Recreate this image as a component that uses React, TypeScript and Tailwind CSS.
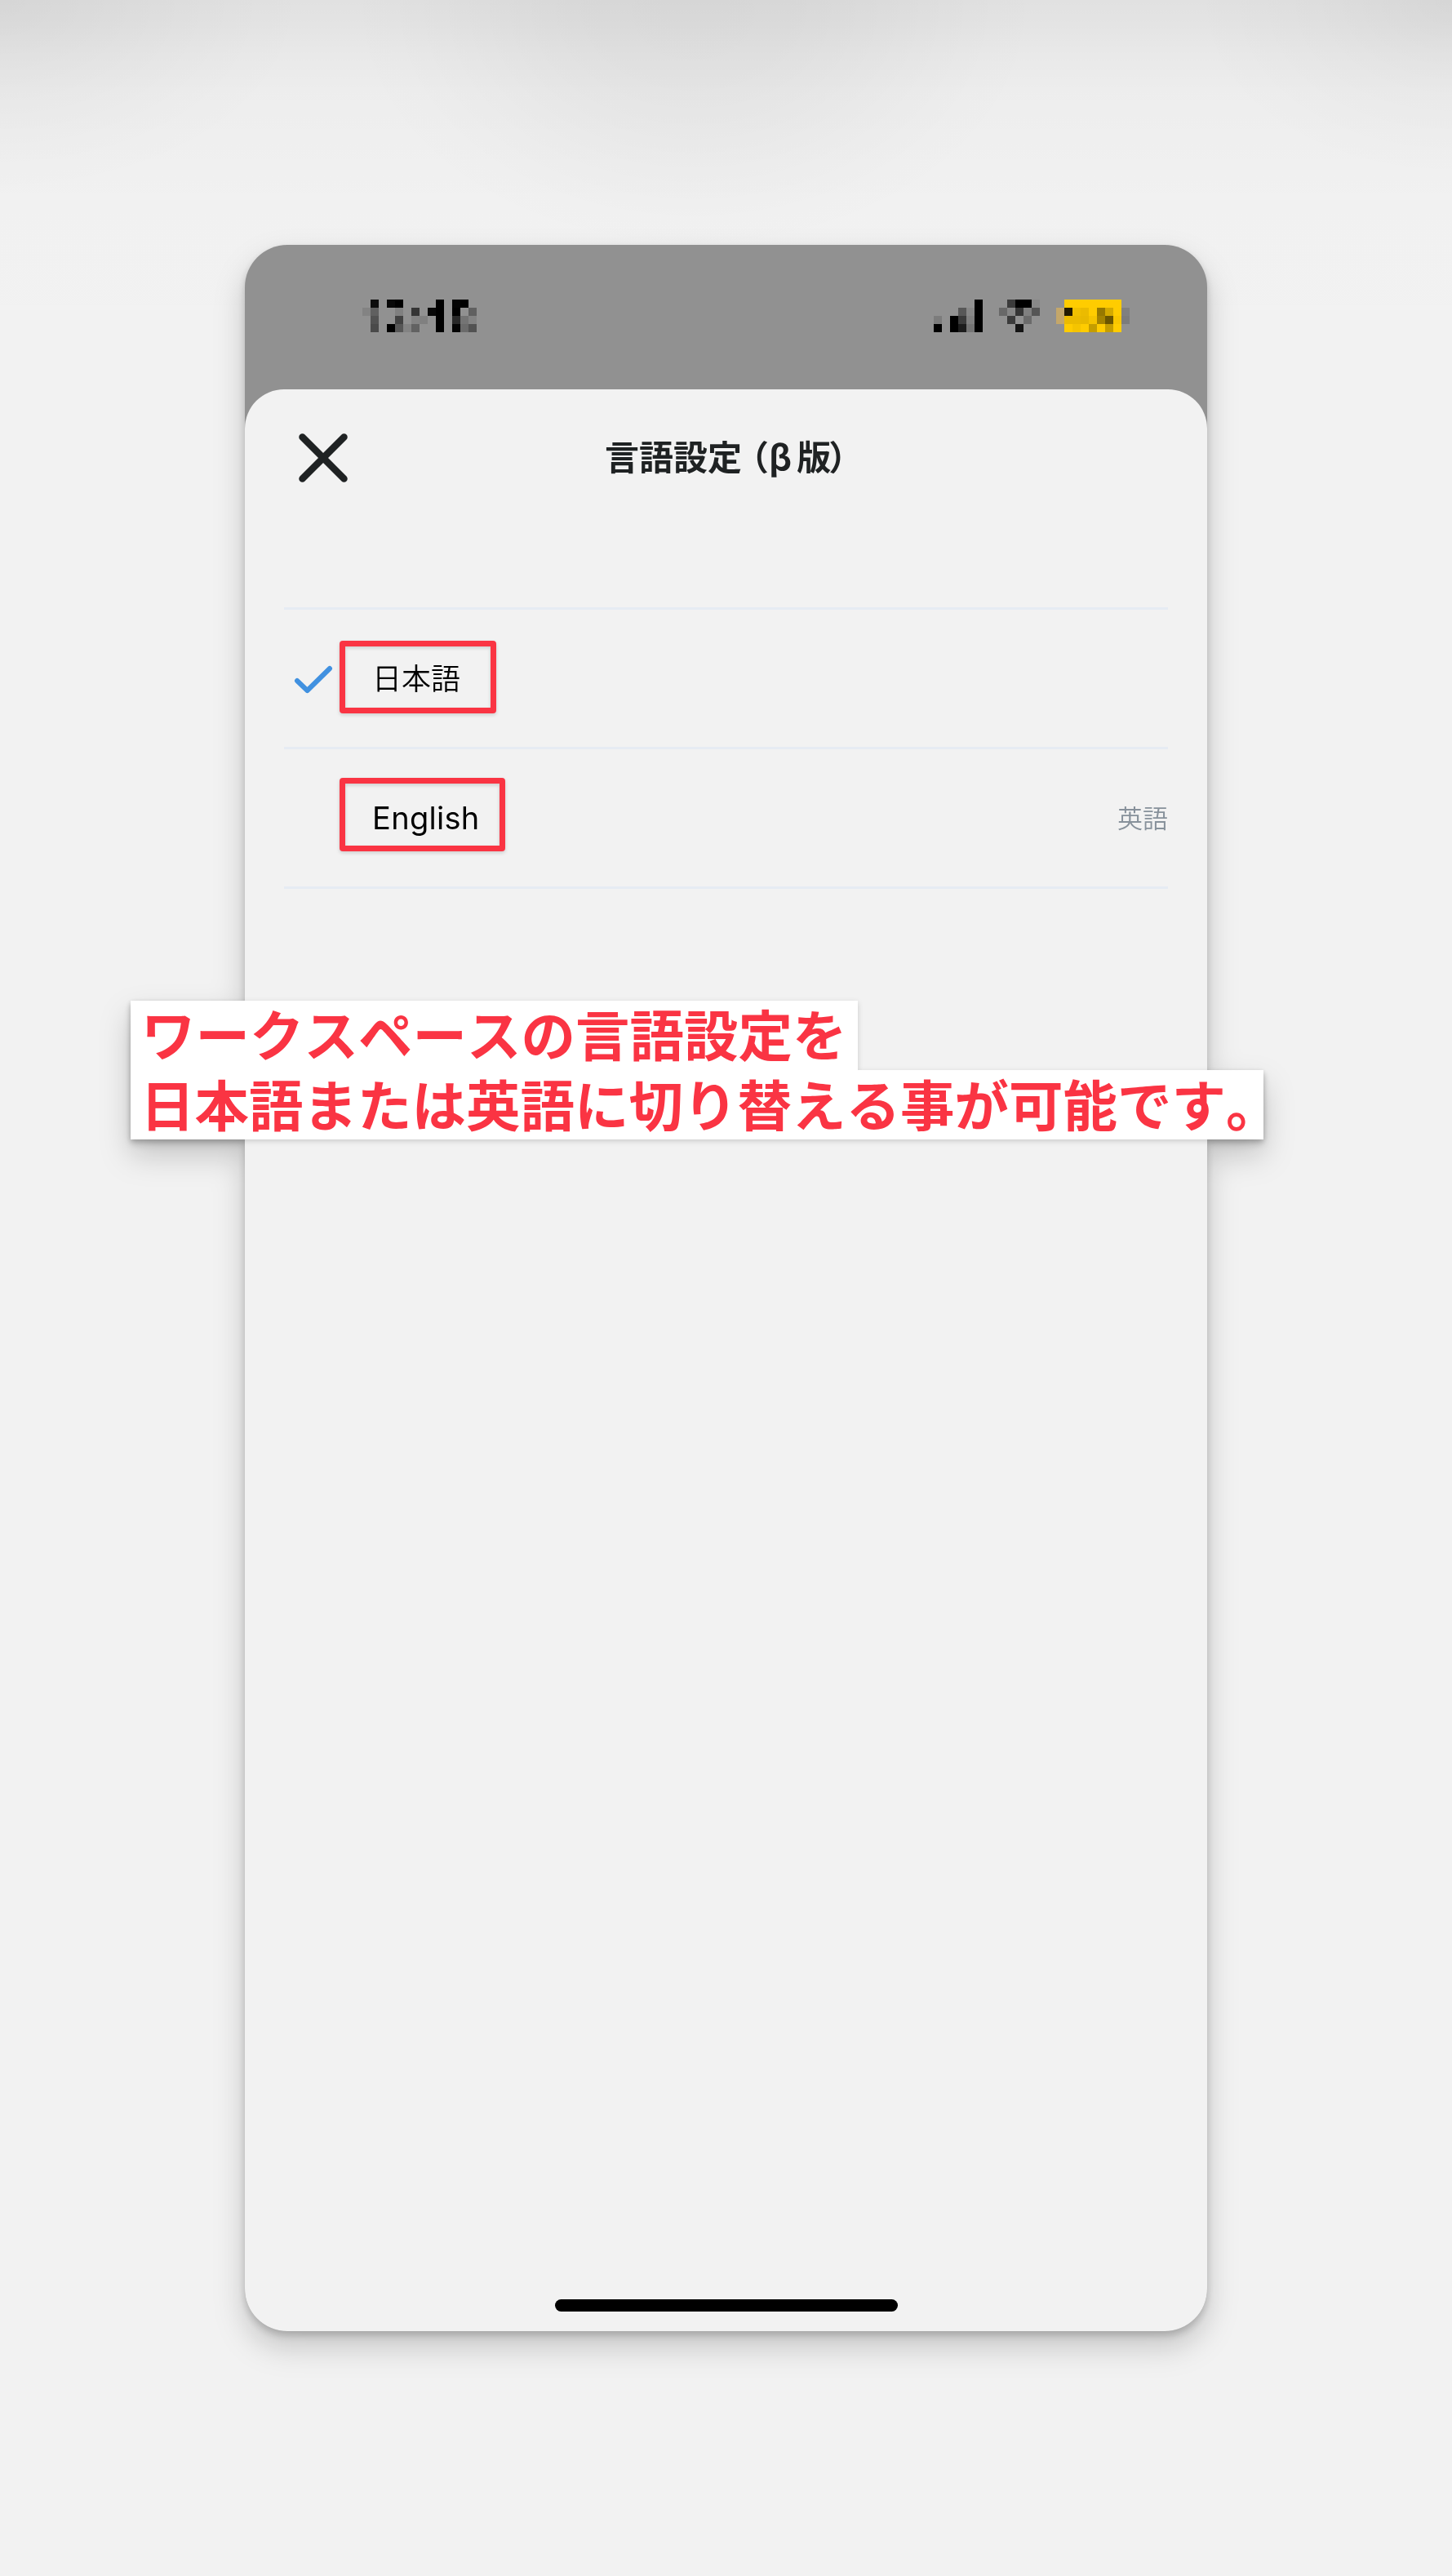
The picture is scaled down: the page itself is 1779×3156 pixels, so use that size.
const languages = [
  { label: "日本語", note: "", selected: true },
  { label: "English", note: "英語", selected: false },
];

type Block = [col: number, row: number, fill: string];

const clockBlocks: Block[] = [
  [1, 0, "#0c0c0c"], [3, 0, "#080808"], [4, 0, "#000"], [9, 0, "#000"], [11, 0, "#040404"], [12, 0, "#000"],
  [0, 1, "#838383"], [1, 1, "#606060"], [4, 1, "#808080"], [6, 1, "#353535"], [8, 1, "#080808"], [9, 1, "#000"],
  [11, 1, "#000"], [13, 1, "#606060"],
  [1, 2, "#525252"], [4, 2, "#424242"], [6, 2, "#838383"], [7, 2, "#808080"], [9, 2, "#000"], [11, 2, "#282828"],
  [12, 2, "#747474"], [13, 2, "#838383"],
  [1, 3, "#4a4a4a"], [3, 3, "#000"], [4, 3, "#575757"], [5, 3, "#838383"], [6, 3, "#626262"], [9, 3, "#000"],
  [11, 3, "#040404"], [12, 3, "#6b6b6b"], [13, 3, "#525252"],
];

const statusBlocks: Block[] = [
  // signal
  [5, 0, "#000"], [3, 1, "#585858"], [4, 1, "#888"], [5, 1, "#000"],
  [0, 2, "#7c7c7c"], [2, 2, "#000"], [3, 2, "#3b3b3b"], [4, 2, "#808080"], [5, 2, "#000"],
  [0, 3, "#000"], [2, 3, "#000"], [3, 3, "#1c1c1c"], [4, 3, "#747474"], [5, 3, "#000"],
  // wifi
  [9, 0, "#3b3b3b"], [10, 0, "#000"], [11, 0, "#000"], [12, 0, "#888"],
  [8, 1, "#686868"], [9, 1, "#868686"], [10, 1, "#353535"], [11, 1, "#808080"], [12, 1, "#555"],
  [9, 2, "#3b3b3b"], [11, 2, "#6b6b6b"], [10, 3, "#141414"],
  // battery
  [16, 0, "#fc0"], [17, 0, "#fc0"], [18, 0, "#fc0"], [19, 0, "#fc0"], [20, 0, "#fc0"], [21, 0, "#fc0"], [22, 0, "#fc0"],
  [15, 1, "#c4a76a"], [16, 1, "#221a00"], [17, 1, "#f0c000"], [18, 1, "#ebbb00"], [19, 1, "#fc0"],
  [20, 1, "#967800"], [21, 1, "#d4aa00"], [22, 1, "#fc0"], [23, 1, "#808080"],
  [15, 2, "#c4a76a"], [16, 2, "#ebbb00"], [17, 2, "#ebbb00"], [18, 2, "#e8b900"], [19, 2, "#f5c400"],
  [20, 2, "#a48300"], [21, 2, "#6b5600"], [22, 2, "#f8c600"], [23, 2, "#7c7c7c"],
  [16, 3, "#fc0"], [17, 3, "#f5c400"], [18, 3, "#fc0"], [19, 3, "#c49d00"], [20, 3, "#fc0"], [21, 3, "#c49d00"],
  [22, 3, "#fc0"],
];

function Mosaic({ blocks, cols }: { blocks: Block[]; cols: number }) {
  return (
    <svg width={cols * 10} height={40} shapeRendering="crispEdges" aria-hidden="true">
      {blocks.map(([col, row, fill]) => (
        <rect key={`${col}-${row}`} x={col * 10} y={row * 10} width={10} height={10} fill={fill} />
      ))}
    </svg>
  );
}

function CloseIcon() {
  return (
    <svg width="60" height="60" viewBox="0 0 60 60" fill="none" stroke="#1f2223" strokeWidth="8.5" strokeLinecap="round">
      <path d="M4.5 4.5 55.5 55.5M55.5 4.5 4.5 55.5" />
    </svg>
  );
}

function CheckIcon() {
  return (
    <svg width="48" height="36" viewBox="0 0 48 36" fill="none" stroke="#4191e0" strokeWidth="6" strokeLinecap="round" strokeLinejoin="round">
      <path d="M4 19 16.5 31 44 4" />
    </svg>
  );
}

function Backdrop() {
  return (
    <div className="absolute inset-x-0 top-0 h-[640px] overflow-hidden">
      <div className="absolute inset-0 bg-[linear-gradient(to_bottom,rgba(0,0,0,0.07)_0px,rgba(0,0,0,0.058)_30px,rgba(0,0,0,0.038)_65px,rgba(0,0,0,0.02)_115px,rgba(0,0,0,0.01)_180px,rgba(0,0,0,0.005)_260px,transparent_500px)]" />
      <div className="absolute inset-0 bg-[radial-gradient(ellipse_440px_320px_at_850px_0px,rgba(0,0,0,0.05),rgba(0,0,0,0.045)_30%,rgba(0,0,0,0.033)_48%,rgba(0,0,0,0.017)_68%,rgba(0,0,0,0.005)_86%,transparent)]" />
      <div className="absolute inset-0 bg-[radial-gradient(ellipse_380px_240px_at_0px_0px,rgba(0,0,0,0.05),rgba(0,0,0,0.036)_30%,rgba(0,0,0,0.024)_50%,rgba(0,0,0,0.008)_78%,transparent)]" />
      <div className="absolute inset-0 bg-[radial-gradient(ellipse_320px_220px_at_1779px_0px,rgba(0,0,0,0.05),rgba(0,0,0,0.03)_30%,rgba(0,0,0,0.018)_50%,rgba(0,0,0,0.006)_78%,transparent)]" />
    </div>
  );
}

export default function App() {
  return (
    <div className="relative flex h-[3156px] w-[1779px] justify-center overflow-hidden bg-[#f2f2f2] pt-[300px] font-[Inter,'Noto_Sans_CJK_JP',sans-serif] [font-kerning:none]">
      <Backdrop />

      <div className="relative h-[2556px] w-[1179px] [filter:drop-shadow(0_5px_5px_rgba(0,0,0,0.18))_drop-shadow(0_18px_18px_rgba(0,0,0,0.19))]">
        {/* Phone */}
        <div className="flex h-full flex-col overflow-hidden rounded-[52px] bg-[#919191]">
          <div className="flex h-[177px] shrink-0 items-start justify-between pt-[67px] pr-[95px] pl-[144px]">
            <Mosaic blocks={clockBlocks} cols={14} />
            <Mosaic blocks={statusBlocks} cols={24} />
          </div>

          {/* Sheet */}
          <div className="flex grow flex-col items-center rounded-t-[48px] bg-[#f2f2f2]">
            <header className="flex h-[168px] w-full items-center pl-[66px]">
              <button type="button" aria-label="閉じる">
                <CloseIcon />
              </button>
              <h1 className="ml-[315px] pb-[6px] text-[42px] leading-none font-bold whitespace-nowrap text-[#1f2223] font-['Noto_Sans_CJK_JP',sans-serif]">
                言語設定<span className="-ml-[9px]">（</span>β<span className="ml-[6px]">版</span>
                <span className="-ml-[3px]">）</span>
              </h1>
            </header>

            <ul className="mt-[99px] w-[1083px] border-t-[3px] border-[#e6ebf3]">
              {languages.map((lang) => (
                <li key={lang.label} className="relative flex h-[171px] items-center border-b-[3px] border-[#e6ebf3]">
                  <span className="flex w-[108px] pt-[4px] pl-[12px]">{lang.selected && <CheckIcon />}</span>
                  <span
                    className={
                      lang.selected
                        ? "pb-[4px] text-[36px] leading-none font-[350] text-black font-['Noto_Sans_CJK_JP',sans-serif]"
                        : "text-[38px] leading-none tracking-[0.3px] text-black"
                    }
                  >
                    {lang.label}
                  </span>
                  <span className="ml-auto pb-[4px] text-[31px] leading-none font-[350] text-[#87919b] font-['Noto_Sans_CJK_JP',sans-serif]">
                    {lang.note}
                  </span>
                  <span
                    className={
                      lang.selected
                        ? "absolute top-[38px] left-[68px] h-[89px] w-[192px] rounded-[4px] border-[7px] border-[#fa3443] [filter:drop-shadow(0_2px_2px_rgba(0,0,0,0.15))]"
                        : "absolute top-[35px] left-[68px] h-[90px] w-[203px] rounded-[4px] border-[7px] border-[#fa3443] [filter:drop-shadow(0_2px_2px_rgba(0,0,0,0.15))]"
                    }
                  />
                </li>
              ))}
            </ul>

            <div className="mt-auto mb-[24px] h-[15px] w-[420px] rounded-full bg-black" />
          </div>
        </div>

        {/* Callout over the phone */}
        <div className="absolute top-[926px] -left-[140px] flex flex-col text-[66.5px] font-bold whitespace-nowrap text-[#fa3443] font-['Noto_Sans_CJK_JP',sans-serif] [filter:drop-shadow(0_2px_3px_rgba(0,0,0,0.16))]">
          <p className="h-[85px] w-[891px] bg-white pl-[13px] leading-[79px]">ワークスペースの言語設定を</p>
          <p className="h-[85px] w-[1388px] bg-white pl-[12px] leading-[80px]">日本語または英語に切り替える事が可能です。</p>
        </div>
      </div>
    </div>
  );
}
